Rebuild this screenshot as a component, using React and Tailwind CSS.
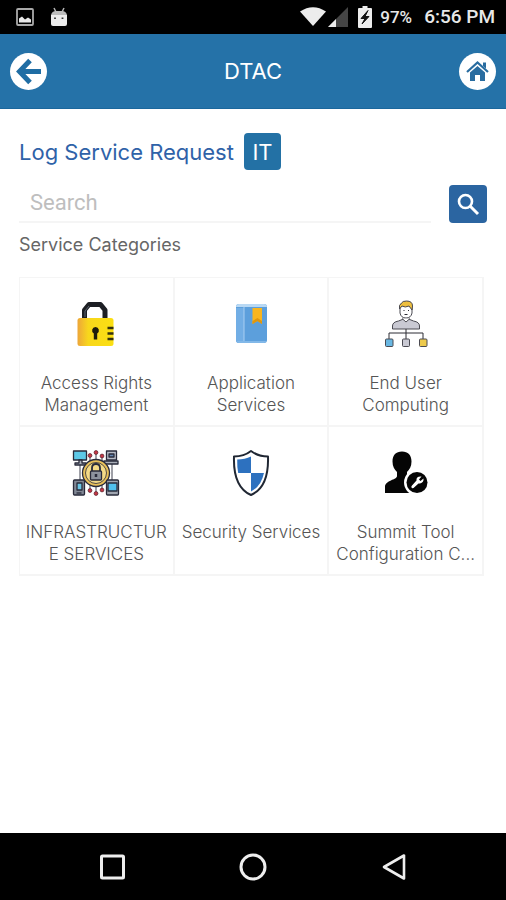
import React, { useState } from 'react';

function LockIcon() {
  return (
    <svg viewBox="0 0 48 48" className="size-12 shrink-0">
      <defs>
        <linearGradient id="lockBody" x1="0" x2="1">
          <stop offset="0" stopColor="#eda63a" />
          <stop offset="0.3" stopColor="#f8d71c" />
          <stop offset="1" stopColor="#fbdf12" />
        </linearGradient>
      </defs>
      <path d="M12.500 21V10L17 4.500H28.500L33 10V21" fill="none" stroke="#1d1f24" strokeWidth="5" strokeLinejoin="round" />
      <path d="M13 17V11L17 6" fill="none" stroke="#5b6472" strokeWidth="1" />
      <rect x="5.500" y="18" width="36" height="28" rx="2.500" fill="url(#lockBody)" />
      <path d="M35.500 28h6M35.500 33.500h6M35.500 39h6" stroke="#33300f" strokeWidth="2.600" />
      <path d="M23.500 27a3.500 3.500 0 0 1 1.700 6.500v6h-3.400v-6a3.500 3.500 0 0 1 1.700-6.500z" fill="#1d1b0c" />
    </svg>
  );
}

function BookIcon() {
  return (
    <svg viewBox="0 0 48 48" className="size-12 shrink-0">
      <rect x="9" y="4" width="31" height="39" rx="3" fill="#5c9fdc" />
      <path d="M12 4h25q3 0 3 3H9q0-3 3-3z" fill="#b9d9f4" />
      <path d="M9 8h8v35h-5q-3 0-3-3z" fill="#72aee5" />
      <path d="M17 7v34" stroke="#a8cff2" strokeWidth="1" />
      <path d="M10 41h29q0 2-3 2H13q-3 0-3-2z" fill="#82b8e8" />
      <path d="M25.500 8H35v16l-4.500-3-5 3z" fill="#f8b51f" />
      <path d="M25.500 21l5-3 4.500 3v3l-4.500-3-5 3z" fill="#df960f" />
    </svg>
  );
}

function UserTreeIcon() {
  return (
    <svg viewBox="0 0 48 48" className="size-12 shrink-0" stroke="#4a4a52" strokeWidth="1" strokeLinejoin="round">
      <path d="M10.500 29v-3q0-4 6-5l5-2h5l5 2q6 1 6 5v3z" fill="#c9c9d3" />
      <path d="M18 8q0-6 6-6t6 6v5q-1 5-6 5t-6-5z" fill="#fff" />
      <path d="M17.500 9q-1-4 2-6 1-2 5-2 6 0 6 5l-.5 4-3-4q-4 2-7 0z" fill="#eebf3d" />
      <path d="M20 18.500l4 3.500 4-3.500" fill="#fff" />
      <path d="M22 10v1M26.500 10v1M22.500 14.500h3M24 29v10M7 39v-6h34v6" fill="none" stroke="#2c2c34" />
      <rect x="3.500" y="39" width="7.500" height="7.500" rx="1" fill="#69b7e2" />
      <rect x="20.500" y="39" width="7" height="7.500" rx="1" fill="#c9c9d3" />
      <rect x="37.500" y="39" width="7.500" height="7.500" rx="1" fill="#edca4d" />
    </svg>
  );
}

function InfrastructureIcon() {
  return (
    <svg viewBox="0 0 48 48" className="size-12 shrink-0" stroke="#292b3b" strokeWidth="1.300" strokeLinejoin="round">
      <path d="M8 13v19M13 16l6 5M40 13v18M35 16l-5 5M13 33l6-5M35 33l-5-5M24 3v42M18 6v36M30 6v36" fill="none" strokeWidth="0.900" />
      <g fill="#c83645" stroke="#5e2832" strokeWidth="0.800">
        <circle cx="24" cy="3.500" r="1.900" />
        <circle cx="18" cy="6.500" r="1.900" />
        <circle cx="30" cy="7" r="1.900" />
        <circle cx="24" cy="44.500" r="1.900" />
        <circle cx="18" cy="41.500" r="1.900" />
        <circle cx="30" cy="41" r="1.900" />
      </g>
      <rect x="1.500" y="2" width="13" height="9" fill="#5dc9e8" />
      <path d="M7 11h3v3h4v2H3v-2h4z" fill="#a9aeb8" />
      <rect x="34.500" y="2" width="10" height="9" fill="#b8bdc8" />
      <path d="M37 5h5v3h-5z" fill="#6789b5" />
      <path d="M32 12h14v3H32z" fill="#a9aeb8" />
      <circle cx="24" cy="24" r="13.500" fill="#e8c05a" />
      <circle cx="24" cy="24" r="10.500" fill="#f4da87" strokeWidth="0.800" />
      <path d="M20 23v-4q0-4 4-4t4 4v4" fill="none" strokeWidth="1.800" />
      <rect x="18.500" y="22" width="11" height="9" rx="1" fill="#8c929e" />
      <path d="M24 25v3" strokeWidth="2.500" />
      <rect x="1.500" y="31" width="11" height="15" rx="1" fill="#818895" />
      <path d="M5 34h5v7H5z" fill="#6cc6e5" />
      <path d="M4.500 44h5" />
      <rect x="34.500" y="31" width="12" height="15" rx="1" fill="#9fa5b0" />
      <path d="M36 34h9v8h-9z" fill="#51c0ed" />
    </svg>
  );
}

function ShieldIcon() {
  return (
    <svg viewBox="0 0 48 48" className="size-12 shrink-0">
      <path d="M24 2q7 5.500 17 5.500Q42 38 24 46 6 38 7 7.500 17 7.500 24 2z" fill="#fff" stroke="#202733" strokeWidth="2" strokeLinejoin="round" />
      <path d="M24 7.500V24H11.200Q10 18 10.200 10.500 18 10.500 24 7.500z" fill="#2d71bf" />
      <path d="M24 24h13Q34 37.500 24 42.500z" fill="#2d71bf" />
    </svg>
  );
}

function UserToolIcon() {
  return (
    <svg viewBox="0 0 48 48" className="size-12 shrink-0">
      <path d="M10.500 12.500C10.500 6 14 2.500 20 2.500s9.500 3.500 9.500 10c0 5-2 8-4.500 10.500v4c0 3 7 4 7 8v9H3v-6c0-7 12-7 12-11v-4c-2.500-2.500-4.500-5.500-4.500-10.500z" fill="#050505" />
      <circle cx="35" cy="33.500" r="13" fill="#fff" />
      <circle cx="35" cy="33.500" r="10.500" fill="#050505" />
      <path d="M39.500 27.500l-2.500 3 1.500 1.500 3-2.500q.5 4-3.500 5h-1.500l-5 4.500q-1.500.5-2-.5t.5-2l4.500-5q-.500-4.500 5-4z" fill="#fff" />
    </svg>
  );
}

const categories = [
  { name: 'Access Rights Management', Icon: LockIcon },
  { name: 'Application Services', Icon: BookIcon },
  { name: 'End User Computing', Icon: UserTreeIcon },
  { name: 'INFRASTRUCTURE SERVICES', Icon: InfrastructureIcon },
  { name: 'Security Services', Icon: ShieldIcon },
  { name: 'Summit Tool Configuration C...', Icon: UserToolIcon },
];

function StatusBar() {
  return (
    <div className="flex h-[34px] items-center bg-black pr-[11px] pl-4 font-[Roboto,sans-serif] text-[#e8e8e8]">
      <svg viewBox="0 0 18 18" className="size-[18px]">
        <rect x="1" y="1" width="16" height="16" rx="1" fill="none" stroke="#a9a9a9" strokeWidth="1.800" />
        <path d="M3 14.500v-4l3-2 3 3 3-2 3 2v3z" fill="#e8e8e8" />
      </svg>
      <svg viewBox="0 0 18 20" className="ml-4 h-5 w-[18px]">
        <path d="M4 1l2 4M14 1l-2 4" stroke="#b5b5b5" strokeWidth="1.500" />
        <path d="M1 8q1-4 5-4h6q4 0 5 4z" fill="#bdbdbd" />
        <path d="M1 8h16v9q0 2-2 2H3q-2 0-2-2z" fill="#ececec" />
        <path d="M5 10.500v1.500M12.500 10.500v1.500" stroke="#333" strokeWidth="1.800" />
      </svg>
      <div className="ml-auto flex items-center">
        <svg viewBox="0 0 26 20" className="h-5 w-[26px]">
          <path d="M0 4.500Q13-4 26 4.500L13 19z" fill="#ececec" />
        </svg>
        <svg viewBox="0 0 20 20" className="ml-0.5 size-5">
          <path d="M20 0v20H0z" fill="#454545" />
          <path d="M8 12v8H0z" fill="#ececec" />
        </svg>
        <svg viewBox="0 0 14 22" className="ml-2.5 h-[22px] w-3.5">
          <path d="M4.500 0h5v2H13q1 0 1 1v18q0 1-1 1H1q-1 0-1-1V3q0-1 1-1h3.500z" fill="#ececec" />
          <path d="M10 4.500L3 12.500h4L4 18 11 10.500H7z" fill="#111" stroke="#111" />
        </svg>
        <span className="ml-2 text-[17px] leading-5 font-medium">97%</span>
        <span className="ml-3 text-[19px] leading-5 font-medium">6:56 PM</span>
      </div>
    </div>
  );
}

function Header() {
  return (
    <header className="flex h-[75px] items-center justify-between border-b border-[#1b679c] bg-[#2572a8] px-2.5">
      <button aria-label="Back" className="flex size-[37px] items-center justify-center rounded-full bg-white">
        <svg viewBox="0 0 37 37" className="size-[37px]" fill="none" stroke="#1f6da4" strokeWidth="5">
          <path d="M31 18.500H10M20 7.500L9.500 18.500 20 29.500" />
        </svg>
      </button>
      <h1 className="text-[22px] leading-7 text-white">DTAC</h1>
      <button aria-label="Home" className="flex size-[37px] items-center justify-center rounded-full bg-white">
        <svg viewBox="0 0 37 37" className="size-[37px]" fill="#286ca0">
          <path d="M8 19L18.500 9.500 29 19" fill="none" stroke="#286ca0" strokeWidth="2.200" />
          <path d="M24 9.500h3v6l-3-2.500z" />
          <path d="M18.500 13l7.500 6.500V28h-5v-6h-5v6h-5v-8.500z" />
        </svg>
      </button>
    </header>
  );
}

function NavBar() {
  return (
    <nav className="flex h-[67px] items-center justify-around bg-black px-[42px] text-[#eee]">
      <button aria-label="Recent apps">
        <svg viewBox="0 0 28 28" className="size-7" fill="none" stroke="currentColor" strokeWidth="3">
          <rect x="3.500" y="3" width="22" height="22" rx="1" />
        </svg>
      </button>
      <button aria-label="Home screen">
        <svg viewBox="0 0 28 28" className="size-7" fill="none" stroke="currentColor" strokeWidth="3">
          <circle cx="14" cy="14" r="12" />
        </svg>
      </button>
      <button aria-label="Previous">
        <svg viewBox="0 0 28 28" className="size-7" fill="none" stroke="currentColor" strokeWidth="2.600" strokeLinejoin="round">
          <path d="M24 2.500v23L4 14z" />
        </svg>
      </button>
    </nav>
  );
}

export default function App() {
  const [search, setSearch] = useState('');

  return (
    <div className="flex min-h-screen flex-col bg-white font-[Inter,sans-serif]">
      <StatusBar />
      <Header />
      <main className="flex-1 px-[19px] pt-6">
        <div className="flex items-center gap-2.5">
          <h2 className="text-[22px] leading-8 text-[#2f62a8]">Log Service Request</h2>
          <span className="flex size-[37px] items-center justify-center rounded bg-[#2371a5] text-[22px] leading-7 text-white">IT</span>
        </div>
        <form className="mt-3.5 flex items-center gap-[18px]" onSubmit={(e) => e.preventDefault()}>
          <input
            aria-label="Search"
            placeholder="Search"
            value={search}
            onChange={(e) => setSearch(e.target.value)}
            className="h-[39px] min-w-0 flex-1 border-b-2 border-[#f5f5f5] px-[11px] font-[Roboto,sans-serif] text-[22px] text-[#555] outline-none placeholder:text-[#bebebe]"
          />
          <button aria-label="Submit search" className="flex size-[38px] items-center justify-center rounded bg-[#2b65a1]">
            <svg viewBox="0 0 24 24" className="size-6" fill="none" stroke="#fff">
              <circle cx="9.500" cy="9.500" r="6.500" strokeWidth="2.600" />
              <path d="M14 14l8 8" strokeWidth="3" />
            </svg>
          </button>
        </form>
        <h3 className="mt-2.5 text-[18px] leading-6 text-[#666]">Service Categories</h3>
        <div className="mt-5 mr-[3px] grid grid-cols-3 border-t border-l border-[#f5f5f5]">
          {categories.map(({ name, Icon }) => (
            <button key={name} className="flex h-[149px] flex-col items-center gap-6 border-r-2 border-b-2 border-[#f5f5f5] px-1 pt-[22px]">
              <Icon />
              <span className="w-full text-[17px] leading-[22px] font-light wrap-break-word text-[#555]">{name}</span>
            </button>
          ))}
        </div>
      </main>
      <NavBar />
    </div>
  );
}
